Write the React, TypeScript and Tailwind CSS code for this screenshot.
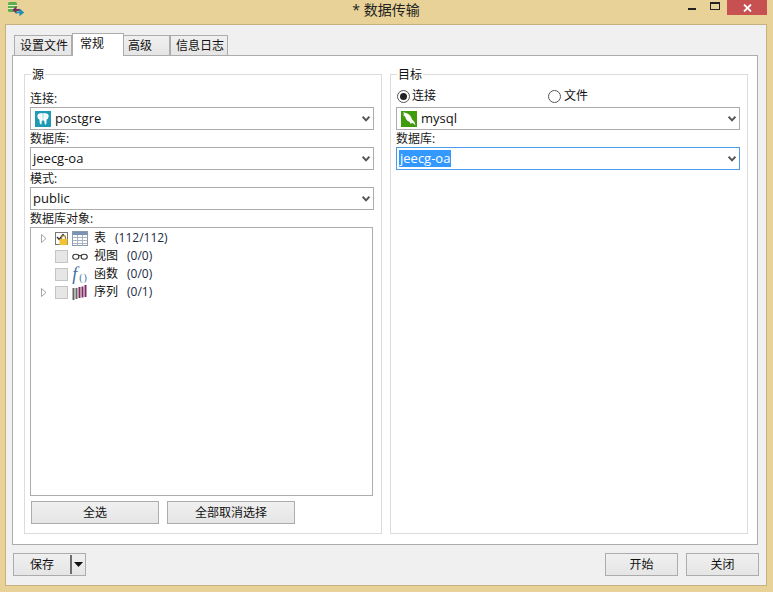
import React from "react";

const FONT = "[font-family:'Open_Sans','Noto_Sans_CJK_SC',sans-serif]";

function Chevron() {
  return (
    <svg width="8" height="6" viewBox="0 0 8 6" className="shrink-0">
      <path d="M0.6 0.8 L4 4.4 L7.4 0.8" fill="none" stroke="#555" strokeWidth="2" />
    </svg>
  );
}

function PgIcon() {
  return (
    <svg width="16" height="16" viewBox="0 0 16 16" className="shrink-0">
      <rect width="16" height="16" fill="#1d9bb2" />
      <path d="M2.5 4 C3.2 2 6.8 1.8 8 2.6 C9.2 1.8 12.8 2 13.5 4 C14 6 13 8 11.6 8.6 L11.4 12.6 L10 14 L9.2 9.5 L6.8 9.5 L6.4 13.8 L4.8 12.6 L4.4 8.6 C3 8 2 6 2.5 4 Z" fill="#fff" />
      <path d="M8 3 V8.5" stroke="#7fcbd8" strokeWidth="0.8" />
      <path d="M5 4.5 V7 M11 4.5 V7" stroke="#bfe4ea" strokeWidth="0.7" />
    </svg>
  );
}

function MysqlIcon() {
  return (
    <svg width="16" height="16" viewBox="0 0 16 16" className="shrink-0">
      <rect width="16" height="16" fill="#3f9c0c" />
      <path d="M2 1.5 C3.5 1.5 6 2 8 3.5 C10 5 10.5 7.5 11.5 9 C12.5 10 14 11 14.5 14.5 C13 12.8 11.5 12 10.5 11.6 L10 13.5 L8.8 11 C6.5 10.5 5 8.5 4.5 6.5 C4.2 5.2 3 4.5 2 4 L3.2 3.2 Z" fill="#fff" />
    </svg>
  );
}

function Combo({ icon, text, focused }: { icon?: React.ReactNode; text: string; focused?: boolean }) {
  return (
    <div
      className={`flex h-[23px] w-[344px] items-center border bg-white text-[13px] leading-none ${
        focused ? "border-[#4a9cea]" : "border-[#acacac]"
      } ${icon ? "pl-[4px]" : "pl-[2px]"}`}
    >
      {icon && <span className="mr-[4px] flex">{icon}</span>}
      <span className="flex-1">
        {focused ? (
          <span className="inline-block bg-[#3399ff] px-[1px] py-[2px] text-white">{text}</span>
        ) : (
          text
        )}
      </span>
      <span className="mr-[3px] flex w-[8px] justify-center">
        <Chevron />
      </span>
    </div>
  );
}

function FieldLabel({ children }: { children: React.ReactNode }) {
  return <div className="flex h-[17px] items-end text-[12px] leading-[16px] text-[#1a1a1a]">{children}</div>;
}

function Group({ title, children }: { title: string; children: React.ReactNode }) {
  return (
    <div className="relative flex flex-col border border-[#dcdcdc] pl-[5px] pr-[7px]">
      <span className="absolute -top-[8px] left-[6px] bg-white px-[1px] text-[12px] leading-[16px]">{title}</span>
      {children}
    </div>
  );
}

function Btn({ children, className = "" }: { children: React.ReactNode; className?: string }) {
  return (
    <div
      className={`flex h-[23px] items-center justify-center border border-[#acacac] bg-gradient-to-b from-[#f0f0f0] to-[#e5e5e5] text-[12px] ${className}`}
    >
      {children}
    </div>
  );
}

function Arrow() {
  return (
    <svg width="7" height="9" viewBox="0 0 7 9" className="shrink-0">
      <path d="M1.5 0.5 L6 4.5 L1.5 8.5 Z" fill="#fff" stroke="#a6a6a6" />
    </svg>
  );
}

function TableIcon() {
  return (
    <svg width="16" height="15" viewBox="0 0 16 15" className="shrink-0">
      <rect x="0.5" y="0.5" width="15" height="14" fill="#fff" stroke="#8a99ad" />
      <rect x="1" y="1" width="14" height="3" fill="#7b93b3" />
      <path d="M0.5 6.5H15.5M0.5 9.5H15.5M0.5 12.5H15.5M5.5 4V14.5M10.5 4V14.5" stroke="#a9b4c2" />
    </svg>
  );
}

function GlassesIcon() {
  return (
    <svg width="16" height="15" viewBox="0 0 16 15" className="shrink-0">
      <ellipse cx="3.8" cy="7.8" rx="3.1" ry="2.5" fill="none" stroke="#333" strokeWidth="1.1" />
      <ellipse cx="12.2" cy="7.8" rx="3.1" ry="2.5" fill="none" stroke="#333" strokeWidth="1.1" />
      <path d="M6.7 6.8 Q8 6.2 9.3 6.8" fill="none" stroke="#333" strokeWidth="1" />
    </svg>
  );
}

function SeqIcon() {
  return (
    <svg width="16" height="15" viewBox="0 0 16 15" className="shrink-0">
      <rect x="0.5" y="3" width="2" height="12" fill="#666" />
      <rect x="3.5" y="3" width="2" height="11" fill="#666" />
      <rect x="6.5" y="2" width="2" height="11" fill="#7d2c62" />
      <rect x="9.5" y="1.5" width="2" height="11" fill="#7d2c62" />
      <rect x="12.5" y="0" width="2" height="12" fill="#7d2c62" />
    </svg>
  );
}

function TreeRow({
  arrow,
  checked,
  icon,
  label,
  count,
}: {
  arrow?: boolean;
  checked?: boolean;
  icon: React.ReactNode;
  label: string;
  count: string;
}) {
  return (
    <div className="flex h-[18px] items-center text-[12px] leading-none">
      <span className="ml-[9px] flex w-[15px] shrink-0">{arrow && <Arrow />}</span>
      <span
        className={`relative flex h-[13px] w-[13px] shrink-0 border ${
          checked ? "border-[#777] bg-white" : "border-[#c4c4c4] bg-[#e6e6e6]"
        }`}
      >
        {checked && (
          <>
            <svg width="9" height="9" viewBox="0 0 9 9" className="absolute left-0 top-0">
              <path d="M1 4 L3.2 6.5 L7.5 1" fill="none" stroke="#333" strokeWidth="1.4" />
            </svg>
            <svg width="11" height="10" viewBox="0 0 11 10" className="absolute left-[2px] top-[2px]">
              <path d="M3.5 4V2.6a2 2 0 0 1 4 0V4" fill="none" stroke="#9a7a24" strokeWidth="1.2" />
              <rect x="1.5" y="4" width="8" height="6" fill="#f1c232" />
            </svg>
          </>
        )}
      </span>
      <span className="ml-[4px] flex w-[16px] justify-center">{icon}</span>
      <span className="ml-[6px]">{label}</span>
      <span className="ml-[9px] text-[#1c2a44]">{count}</span>
    </div>
  );
}

function Tab({ children, active, className = "" }: { children: React.ReactNode; active?: boolean; className?: string }) {
  return active ? (
    <div className={`z-10 -mb-[1px] flex h-[23px] items-start border border-b-0 border-[#acacac] bg-white pl-[7px] pt-[2px] text-[12px] leading-[16px] ${className}`}>
      {children}
    </div>
  ) : (
    <div className={`flex h-[20px] items-center border border-b-0 border-[#acacac] bg-gradient-to-b from-[#f0f0f0] to-[#e5e5e5] pl-[5px] text-[12px] leading-[16px] ${className}`}>
      {children}
    </div>
  );
}

export default function App() {
  return (
    <div className={`flex h-[592px] w-[773px] flex-col overflow-hidden bg-[#e8d298] pb-[6px] pl-[5px] pr-[6px] text-[#111] ${FONT}`}>
      <div className="grid h-[24px] shrink-0 grid-cols-[1fr_auto_1fr]">
        <div className="pl-[3px] pt-[2px]">
          <svg width="17" height="16" viewBox="0 0 17 16">
            <rect x="0" y="0" width="9" height="10" rx="1.5" fill="#5cae4a" />
            <path d="M0 3.5H9M0 6.5H9" stroke="#e4f0d0" />
            <path d="M9 5 V8 H13 V10 H9 V13 L5 9 Z" transform="translate(-0.5 -1)" fill="#7d2c62" />
            <path d="M11 8 V11 H7 V13 H11 V16 L16 12 Z" transform="translate(1 -1) scale(0.95)" fill="#1c8fb5" />
          </svg>
        </div>
        <div className="pt-[1px] text-[14px] leading-[18px] text-[#222]">* 数据传输</div>
        <div className="flex items-start justify-end">
          <span className="mr-[14px] mt-[8px] h-[2px] w-[8px] bg-[#222]" />
          <span className="mr-[7px] mt-[2px] h-[8px] w-[10px] border border-t-2 border-[#222]" />
          <span className="flex h-[15px] w-[40px] items-center justify-center bg-[#c75050]">
            <svg width="9" height="8" viewBox="0 0 9 8">
              <path d="M1 0.5 L8 7.5 M8 0.5 L1 7.5" stroke="#fff" strokeWidth="1.8" />
            </svg>
          </span>
        </div>
      </div>

      <div className="flex min-h-0 flex-1 flex-col border border-[#c5b27e] bg-[#f0f0f0] pl-[6px] pr-[7px] pt-[8px]">
        <div className="flex h-[22px] shrink-0 items-end pl-[2px]">
          <Tab className="w-[58px]">设置文件</Tab>
          <Tab active className="w-[52px]">常规</Tab>
          <Tab className="w-[46px] !border-l-0 !pl-[4px]">高级</Tab>
          <Tab className="w-[58px]">信息日志</Tab>
        </div>

        <div className="mr-[1px] grid h-[490px] shrink-0 grid-cols-2 gap-[8px] border border-[#acacac] bg-white pb-[10px] pl-[11px] pr-[9px] pt-[18px]">
          <Group title="源">
            <div className="h-[15px]" />
            <FieldLabel>连接:</FieldLabel>
            <Combo icon={<PgIcon />} text="postgre" />
            <FieldLabel>数据库:</FieldLabel>
            <Combo text="jeecg-oa" />
            <FieldLabel>模式:</FieldLabel>
            <Combo text="public" />
            <FieldLabel>数据库对象:</FieldLabel>
            <div className="mr-[1px] h-[269px] border border-[#acacac] bg-white pt-[1px]">
              <TreeRow arrow checked icon={<TableIcon />} label="表" count="(112/112)" />
              <TreeRow icon={<GlassesIcon />} label="视图" count="(0/0)" />
              <TreeRow
                icon={
                  <span className="flex items-end leading-none text-[#3b6ea5] [font-family:'Liberation_Serif',serif]">
                    <span className="text-[18px] italic">f</span>
                    <span className="ml-[2px] text-[10px] tracking-[1px]">()</span>
                  </span>
                }
                label="函数"
                count="(0/0)"
              />
              <TreeRow arrow icon={<SeqIcon />} label="序列" count="(0/1)" />
            </div>
            <div className="mt-[5px] flex gap-[8px] pl-[1px]">
              <Btn className="w-[128px]">全选</Btn>
              <Btn className="w-[128px]">全部取消选择</Btn>
            </div>
          </Group>

          <Group title="目标">
            <div className="flex h-[32px] items-end pb-[3px] text-[12px] leading-[16px]">
              <span className="flex w-[152px] items-center">
                <span className="ml-[1px] mr-[2px] flex h-[13px] w-[13px] items-center justify-center rounded-full border border-[#555] bg-white">
                  <span className="h-[7px] w-[7px] rounded-full bg-[#222]" />
                </span>
                连接
              </span>
              <span className="flex items-center">
                <span className="mr-[3px] h-[13px] w-[13px] rounded-full border border-[#555] bg-white" />
                文件
              </span>
            </div>
            <Combo icon={<MysqlIcon />} text="mysql" />
            <FieldLabel>数据库:</FieldLabel>
            <Combo text="jeecg-oa" focused />
          </Group>
        </div>

        <div className="ml-[1px] mt-[8px] flex justify-between">
          <div className="flex h-[23px] w-[73px] items-center border border-[#acacac] bg-gradient-to-b from-[#f0f0f0] to-[#e5e5e5] text-[12px]">
            <span className="flex-1 text-center">保存</span>
            <span className="h-[19px] w-[2px] bg-[#6d6d6d]" />
            <span className="flex w-[13px] justify-center">
              <svg width="9" height="5" viewBox="0 0 9 5">
                <path d="M0 0H9L4.5 5Z" fill="#111" />
              </svg>
            </span>
          </div>
          <div className="flex gap-[8px]">
            <Btn className="w-[73px]">开始</Btn>
            <Btn className="w-[73px]">关闭</Btn>
          </div>
        </div>
      </div>
    </div>
  );
}
